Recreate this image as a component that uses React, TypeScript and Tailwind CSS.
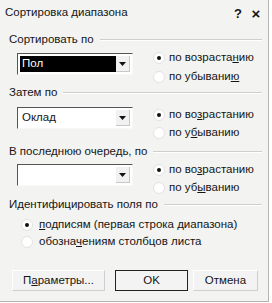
import React from "react";

const font = { fontFamily: '"Liberation Sans", Arial, sans-serif' };

const Radio = ({ checked }: { checked?: boolean }) => (
  <span className="relative inline-block w-[12px] h-[12px] rounded-full bg-white border border-[#e2e2e2] shrink-0">
    {checked && (
      <span className="absolute left-[3px] top-[3px] w-[4px] h-[4px] rounded-full bg-[#111]" />
    )}
  </span>
);

const RadioRow = ({
  checked,
  children,
  className,
}: {
  checked?: boolean;
  children: React.ReactNode;
  className: string;
}) => (
  <div className={`flex items-center ${className}`}>
    <Radio checked={checked} />
    <span className="leading-none whitespace-nowrap">{children}</span>
  </div>
);

const GroupLabel = ({ text, className }: { text: string; className: string }) => (
  <div className={`flex items-center h-[14px] pl-[9px] pr-[6px] ${className}`}>
    <span className="whitespace-nowrap leading-none">{text}</span>
    <div className="flex-1 ml-[6px] border-t border-[#cfcfcf] border-b border-b-white" />
  </div>
);

const Combo = ({ value, selected, className }: { value: string; selected?: boolean; className: string }) => (
  <div
    className={`ml-[17px] w-[116px] h-[22px] flex bg-white border-t border-l border-[#555] border-r border-b border-r-[#f8f8f8] border-b-[#f8f8f8] p-[2px] ${className}`}
  >
    <div className="flex-1 flex items-center">
      <div
        className={`h-full w-full flex items-center pl-[2px] ${selected ? "bg-black text-white" : ""}`}
      >
        {value}
      </div>
    </div>
    <div className="w-[14px] h-full flex items-center justify-center bg-[#f1f1f1] border-r border-b border-[#c8c8c8]">
      <svg width="7" height="4" viewBox="0 0 7 4">
        <path d="M0 0h7L3.5 4z" fill="#111" />
      </svg>
    </div>
  </div>
);

const Button = ({
  children,
  isDefault,
  className,
}: {
  children: React.ReactNode;
  isDefault?: boolean;
  className: string;
}) => (
  <div
    className={`h-[21px] flex items-center justify-center bg-[#f3f3f3] ${
      isDefault
        ? "border border-[#222]"
        : "border-t border-l border-white border-r border-b border-r-[#cfcfcf] border-b-[#cfcfcf]"
    } ${className}`}
  >
    {children}
  </div>
);

export default function App() {
  return (
    <div
      className="w-[272px] h-[303px] bg-white text-[11.5px] text-[#151515] overflow-hidden"
      style={font}
    >
      <div className="w-[269px] h-[302px] bg-[#f3f3f2] border-r border-b border-[#b5b5b5] flex flex-col">
        {/* title bar */}
        <div className="h-[26px] flex items-center pl-[5px] pr-[6px]">
          <span className="flex-1 leading-none">Сортировка диапазона</span>
          <span className="w-[12px] text-center font-bold text-[13px] leading-none">?</span>
          <span className="w-[12px] ml-[6px] text-center font-bold text-[15px] leading-none">×</span>
        </div>

        {/* group 1 */}
        <GroupLabel text="Сортировать по" className="mt-[7px]" />
        <div className="flex items-start">
          <Combo value="Пол" selected className="mt-[6px]" />
          <div className="ml-[20px] mt-[1px] flex flex-col gap-0">
            <RadioRow checked className="h-[19px] gap-[4px]">
              по возраста<u>н</u>ию
            </RadioRow>
            <RadioRow className="h-[19px] gap-[4px]">
              по убывани<u>ю</u>
            </RadioRow>
          </div>
        </div>

        {/* group 2 */}
        <GroupLabel text="Затем по" className="mt-[0px]" />
        <div className="flex items-start">
          <Combo value="Оклад" className="mt-[7px]" />
          <div className="ml-[20px] mt-[6px] flex flex-col">
            <RadioRow checked className="h-[18px] gap-[4px]">
              по во<u>з</u>растанию
            </RadioRow>
            <RadioRow className="h-[18px] gap-[4px]">
              по у<u>б</u>ыванию
            </RadioRow>
          </div>
        </div>

        {/* group 3 */}
        <GroupLabel text="В последнюю очередь, по" className="mt-[3px]" />
        <div className="flex items-start">
          <Combo value="" className="mt-[5px]" />
          <div className="ml-[20px] mt-[2px] flex flex-col">
            <RadioRow checked className="h-[18px] gap-[4px]">
              по во<u>з</u>растанию
            </RadioRow>
            <RadioRow className="h-[18px] gap-[4px]">
              по уб<u>ы</u>ванию
            </RadioRow>
          </div>
        </div>

        {/* group 4 */}
        <GroupLabel text="Идентифицировать поля по" className="mt-[1px]" />
        <div className="flex flex-col pl-[21px] mt-[4px]">
          <RadioRow checked className="h-[17px] gap-[6px]">
            <u>п</u>одписям (первая строка диапазона)
          </RadioRow>
          <RadioRow className="h-[17px] gap-[6px]">
            обозна<u>ч</u>ениям столбцов листа
          </RadioRow>
        </div>

        {/* buttons */}
        <div className="flex mt-[20px] pl-[12px]">
          <Button className="w-[93px]">
            П<u>а</u>раметры...
          </Button>
          <Button isDefault className="w-[73px] ml-[10px]">
            OK
          </Button>
          <Button className="w-[65px] ml-[5px]">Отмена</Button>
        </div>
      </div>
    </div>
  );
}
